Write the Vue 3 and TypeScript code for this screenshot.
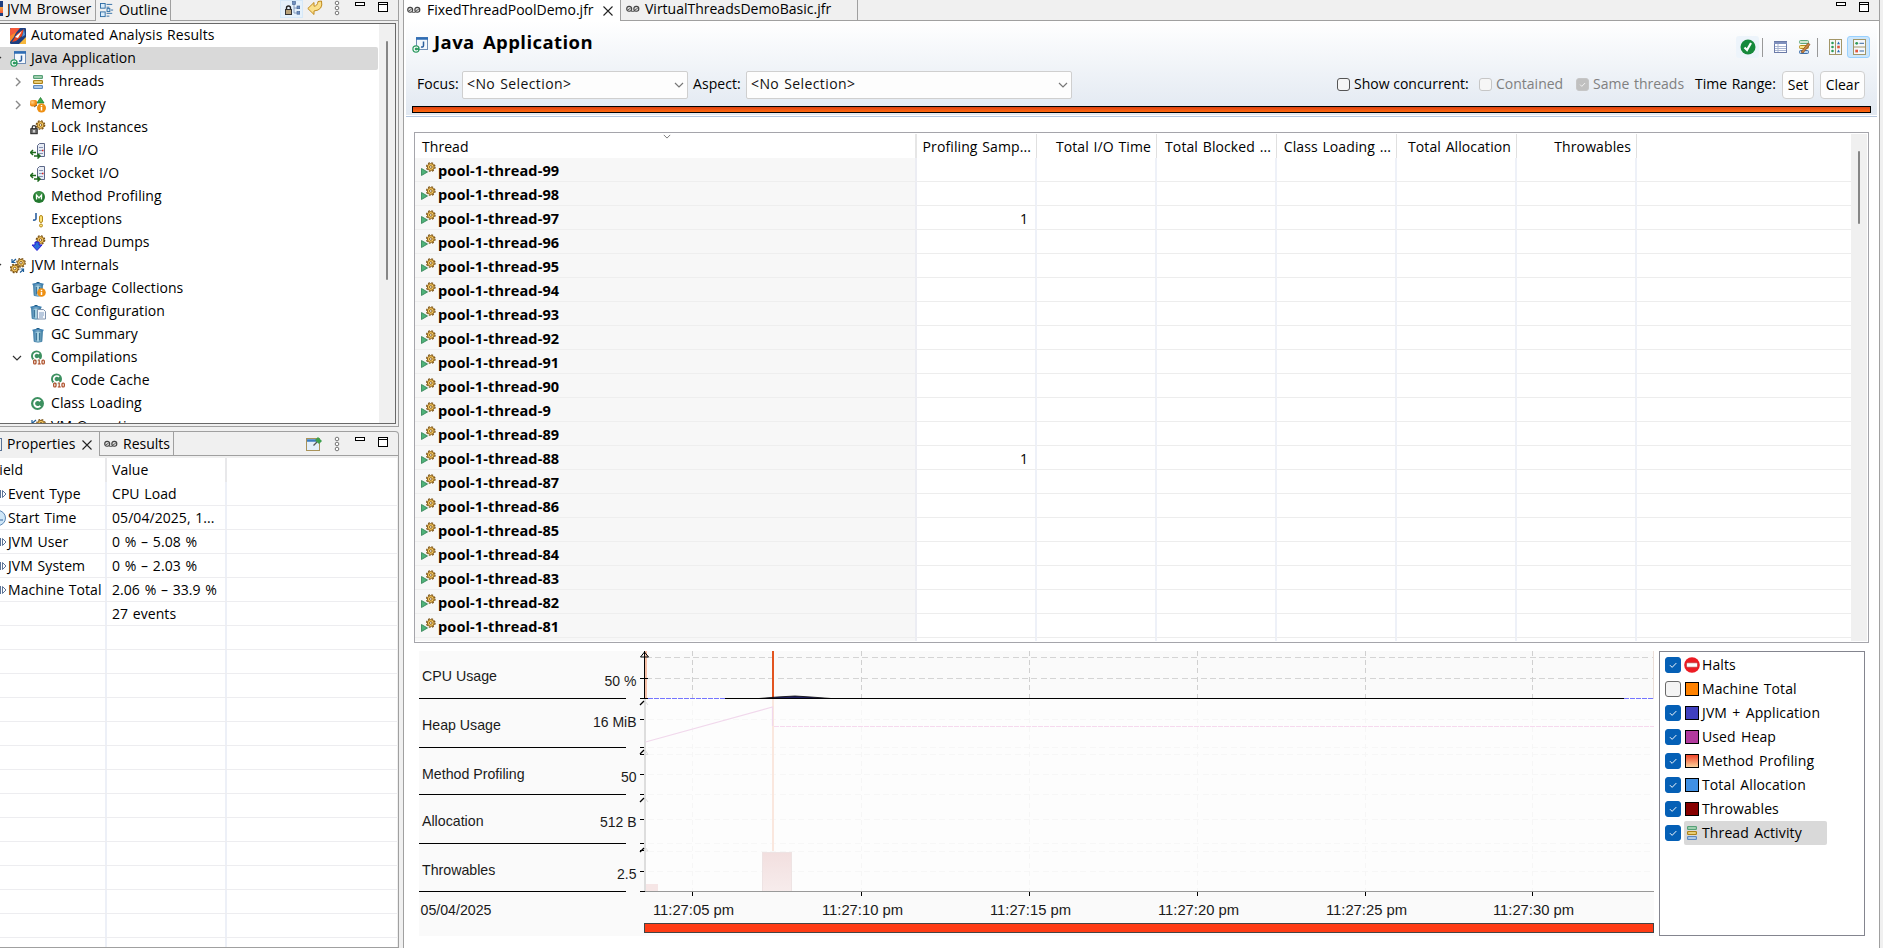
<script setup lang="ts">
interface TreeNode {
  label: string
  icon: string
  depth: number
  arrow?: 'open' | 'closed'
  selected?: boolean
}
interface Property {
  icon: string
  name: string
  value: string
}
interface Series {
  label: string
  checked: boolean
  icon?: string
  swatch?: string
  selected?: boolean
}
interface Lane {
  label: string
  baseline: number
  tick: string
  tickY: number
}

const tree: TreeNode[] = [
  { label: 'Automated Analysis Results', icon: 'rocket', depth: 0 },
  { label: 'Java Application', icon: 'japp', depth: 0, arrow: 'open', selected: true },
  { label: 'Threads', icon: 'threads', depth: 1, arrow: 'closed' },
  { label: 'Memory', icon: 'memory', depth: 1, arrow: 'closed' },
  { label: 'Lock Instances', icon: 'lock', depth: 1 },
  { label: 'File I/O', icon: 'io', depth: 1 },
  { label: 'Socket I/O', icon: 'io', depth: 1 },
  { label: 'Method Profiling', icon: 'method', depth: 1 },
  { label: 'Exceptions', icon: 'exception', depth: 1 },
  { label: 'Thread Dumps', icon: 'dump', depth: 1 },
  { label: 'JVM Internals', icon: 'gears', depth: 0, arrow: 'open' },
  { label: 'Garbage Collections', icon: 'gc', depth: 1 },
  { label: 'GC Configuration', icon: 'gcconf', depth: 1 },
  { label: 'GC Summary', icon: 'bin', depth: 1 },
  { label: 'Compilations', icon: 'compile', depth: 1, arrow: 'open' },
  { label: 'Code Cache', icon: 'compile', depth: 2 },
  { label: 'Class Loading', icon: 'class', depth: 1 },
  { label: 'VM Operations', icon: 'gears', depth: 1 },
]

const properties: Property[] = [
  { icon: 'field', name: 'Event Type', value: 'CPU Load' },
  { icon: 'clock', name: 'Start Time', value: '05/04/2025, 1...' },
  { icon: 'field', name: 'JVM User', value: '0 % – 5.08 %' },
  { icon: 'field', name: 'JVM System', value: '0 % – 2.03 %' },
  { icon: 'field', name: 'Machine Total', value: '2.06 % – 33.9 %' },
  { icon: '', name: '', value: '27 events' },
  ...Array.from({ length: 14 }, () => ({ icon: '', name: '', value: '' })),
]

const columns = ['Profiling Samp...', 'Total I/O Time', 'Total Blocked ...', 'Class Loading ...', 'Total Allocation', 'Throwables']
const threadIds = [99, 98, 97, 96, 95, 94, 93, 92, 91, 90, 9, 89, 88, 87, 86, 85, 84, 83, 82, 81]
const samples: Record<number, string> = { 97: '1', 88: '1' }

const series: Series[] = [
  { label: 'Halts', checked: true, icon: 'halt' },
  { label: 'Machine Total', checked: false, swatch: 'orange' },
  { label: 'JVM + Application', checked: true, swatch: 'blue' },
  { label: 'Used Heap', checked: true, swatch: 'purple' },
  { label: 'Method Profiling', checked: true, swatch: 'warm' },
  { label: 'Total Allocation', checked: true, swatch: 'sky' },
  { label: 'Throwables', checked: true, swatch: 'maroon' },
  { label: 'Thread Activity', checked: true, icon: 'threads', selected: true },
]

const lanes: Lane[] = [
  { label: 'CPU Usage', baseline: 30, tick: '50 %', tickY: 27 },
  { label: 'Heap Usage', baseline: 79, tick: '16 MiB', tickY: 68 },
  { label: 'Method Profiling', baseline: 128, tick: '50', tickY: 123 },
  { label: 'Allocation', baseline: 175, tick: '512 B', tickY: 168 },
  { label: 'Throwables', baseline: 224, tick: '2.5', tickY: 220 },
]
const faintGrid = [68, 96, 103, 123, 143, 168, 192, 200, 220]
const times = [
  { x: 273, label: '11:27:05 pm' },
  { x: 442, label: '11:27:10 pm' },
  { x: 610, label: '11:27:15 pm' },
  { x: 778, label: '11:27:20 pm' },
  { x: 946, label: '11:27:25 pm' },
  { x: 1113, label: '11:27:30 pm' },
]
</script>

<template>
  <div class="workbench">
    <svg class="defs" aria-hidden="true">
      <defs>
        <linearGradient id="gBin" x1="0" x2="1" y1="0" y2="0"><stop offset="0" stop-color="#3f7fae" /><stop offset=".5" stop-color="#b5dbe8" /><stop offset="1" stop-color="#3a7a9d" /></linearGradient>
        <linearGradient id="gBar" x1="0" x2="0" y1="0" y2="1"><stop offset="0" stop-color="#f2dfdf" /><stop offset="1" stop-color="#f7ecec" /></linearGradient>
        <radialGradient id="gOrange" cx=".35" cy=".35"><stop offset="0" stop-color="#ffd08a" /><stop offset="1" stop-color="#f08a10" /></radialGradient>
        <g id="gear"><circle cx="5" cy="5" r="4.200" fill="none" stroke="#7a5316" stroke-width="1.300" stroke-dasharray="1.900 1.400" /><circle cx="5" cy="5" r="3.400" fill="#f7cb62" stroke="#8f6119" stroke-width="1" /><circle cx="5" cy="5" r="1.300" fill="#fff" stroke="#7a5316" stroke-width=".9" /></g>
        <g id="trash"><path d="M3.500 4h9l-.6 10.500q-3.900 1.300-7.800 0z" fill="url(#gBin)" stroke="#3c7ca4" stroke-width=".8" /><path d="M2.500 3.500q5.500-1.800 11 0" fill="none" stroke="#3d7fb0" stroke-width="1.800" /><path d="M6.500 1.500h3" stroke="#1f5c84" /><path d="M6.300 6v7.500M9.700 6v7.500" stroke="#1f5c84" stroke-width=".9" /></g>
      </defs>
      <symbol id="rocket" viewBox="0 0 16 16"><rect width="16" height="16" rx="1" fill="#1d3f80" /><path d="M1 0h9L0 12V1z" fill="#f4593a" /><path d="M9 16h7V9z" fill="#f6b73c" /><path d="M0 8l6-4-2 5-4 5z" fill="#f8892e" /><path d="M2 14L7 6l7-5-2 7-6 5z" fill="#e8451f" /><path d="M5 9l7-6-4 7z" fill="#fff" /><path d="M14 1l1 6-3 2z" fill="#5c9bd8" /></symbol>
      <symbol id="japp" viewBox="0 0 16 16"><rect x="4.500" y=".5" width="11" height="12" fill="#f4f8fd" stroke="#6f8db5" /><path d="M4 1.500h12" stroke="#2e6db5" stroke-width="2.500" /><path d="M11.500 4.500v4q0 2-2.500 1.500" fill="none" stroke="#2c5f9e" stroke-width="1.500" /><circle cx="4" cy="12" r="3.700" fill="#2c9a60" /><path d="M5.700 10.800a2 2 0 1 0 0 2.400" fill="none" stroke="#fff" stroke-width="1.200" /></symbol>
      <symbol id="threads" viewBox="0 0 16 16"><g stroke-width="1.200"><rect x="3.600" y="1.600" width="8.800" height="2.800" rx=".6" fill="#b9dfc0" stroke="#56a077" /><rect x="3.600" y="6.600" width="8.800" height="2.800" rx=".6" fill="#fbe79a" stroke="#ad8218" /><rect x="3.600" y="11.600" width="8.800" height="2.800" rx=".6" fill="#c9dff6" stroke="#5c89c0" /></g></symbol>
      <symbol id="memory" viewBox="0 0 16 16"><path d="M10.500.5L14 6H7z" fill="#3fae4a" stroke="#247a33" stroke-width=".8" /><rect x="0" y="3" width="7" height="6.500" rx="2" fill="url(#gOrange)" /><path d="M4 10l3-2" stroke="#444" stroke-width=".8" /><circle cx="11.500" cy="11" r="4.500" fill="#ee8f12" /><path d="M11.500 8v1.200M11.500 10v3.500" stroke="#fff" stroke-width="1.500" /></symbol>
      <symbol id="lock" viewBox="0 0 16 16"><use href="#gear" x="5.500" y="0" /><path d="M2.200 9V7.500a1.800 1.800 0 0 1 3.600 0V9" fill="none" stroke="#333" stroke-width="1.300" /><rect x=".8" y="8.700" width="6.400" height="5" fill="#777" stroke="#222" /><path d="M4 10v2.500" stroke="#fff" stroke-width="1.300" /></symbol>
      <symbol id="io" viewBox="0 0 16 16"><path d="M7.500 2.500l2-2h5v13h-7z" fill="#e7ecf5" stroke="#5c6788" /><path d="M9 4.500h4M9 7.500h4M9 10.500h4" stroke="#8792b4" /><path d="M12 7.500h1.500" stroke="#d22" stroke-width="1.500" /><path d="M0 9.500h6M3 7L.5 9.500 3 12" fill="none" stroke="#1e6a1e" stroke-width="1.500" /><path d="M4 13h6M7.500 10.500L10 13l-2.500 2.500" fill="none" stroke="#1e6a1e" stroke-width="1.500" /></symbol>
      <symbol id="method" viewBox="0 0 16 16"><circle cx="9" cy="8" r="6" fill="#23792f" /><circle cx="9" cy="6.500" r="4" fill="#4fa457" opacity=".6" /><path d="M6.500 10.500V6L9 8.800 11.500 6v4.500" fill="none" stroke="#fff" stroke-width="1.200" /></symbol>
      <symbol id="exception" viewBox="0 0 16 16"><path d="M6 1v5.500q0 2-3 1.500" fill="none" stroke="#2c5f9e" stroke-width="1.600" /><rect x="9.500" y="3.500" width="3" height="7" rx="1.500" fill="#fbe27a" stroke="#b58a1c" /><circle cx="11" cy="13.500" r="1.500" fill="#fbe27a" stroke="#b58a1c" /></symbol>
      <symbol id="dump" viewBox="0 0 16 16"><use href="#gear" x="5.500" y="0" /><path d="M5 7h4v3h3l-5 5.500L2 10h3z" fill="#2b6ed8" stroke="#2a18d8" /></symbol>
      <symbol id="gears" viewBox="0 0 16 16"><use href="#gear" x="6" y="-.2" /><use href="#gear" x="-.3" y="5.500" /><path d="M6 1L2.500 4M2 1v3.500h3.500M10 14.500l3.500-3M10.500 11h3v3" fill="none" stroke="#1d5d98" stroke-width="1.200" /></symbol>
      <symbol id="bin" viewBox="0 0 16 16"><use href="#trash" /></symbol>
      <symbol id="gc" viewBox="0 0 16 16"><use href="#trash" /><circle cx="11.500" cy="11.500" r="4.300" fill="#ee8f12" /><path d="M11.500 8.700v1.200M11.500 10.700v3.300" stroke="#fff" stroke-width="1.500" /></symbol>
      <symbol id="gcconf" viewBox="0 0 16 16"><use href="#trash" x="-2" /><path d="M7.500 5.500h6l2 2v7.500h-8z" fill="#f5f8fc" stroke="#7f93ae" /><path d="M9 9h5M9 11h5M9 13h4" stroke="#7d9ac0" /></symbol>
      <symbol id="class" viewBox="0 0 16 16"><circle cx="7.500" cy="7.500" r="6.500" fill="#3d9060" /><path d="M10.300 5.200a3.500 3.500 0 1 0 0 4.600" fill="none" stroke="#fff" stroke-width="1.900" /></symbol>
      <symbol id="compile" viewBox="0 0 16 16"><circle cx="6.500" cy="6" r="5.500" fill="#3d9060" /><path d="M9 4a3 3 0 1 0 0 4" fill="none" stroke="#fff" stroke-width="1.700" /><path d="M3 9h13V16H3z" fill="#fff" opacity=".8" /><rect x="3.700" y="10" width="2.300" height="4" rx="1" fill="none" stroke="#a8441c" stroke-width="1.200" /><path d="M8.200 10h1v4M7.800 14h3" fill="none" stroke="#a8441c" stroke-width="1.100" /><rect x="12" y="10" width="2.300" height="4" rx="1" fill="none" stroke="#a8441c" stroke-width="1.200" /></symbol>
      <symbol id="outline" viewBox="0 0 16 16"><g fill="#d9ecfb" stroke="#2e6da4"><rect x=".5" y=".5" width="5" height="5" /><rect x=".5" y="9.500" width="5" height="5" /><rect x="7.500" y="6" width="3" height="3" /></g><path d="M7 1.500h6M7 4.500h3M11.500 7.500H14M7 11h6M7 14h3" stroke="#2e6da4" /></symbol>
      <symbol id="reel" viewBox="0 0 16 8"><rect x=".8" y="1.200" width="5.200" height="5.200" rx="2.300" fill="#ddd" stroke="#444" stroke-width="1.300" /><rect x="8.400" y="1.200" width="5.200" height="5.200" rx="2.300" fill="#ddd" stroke="#444" stroke-width="1.300" /><path d="M2 5l3-2M9.600 5l3-2M5.500 6.500h3.500" stroke="#555" /></symbol>
      <symbol id="close" viewBox="0 0 10 10"><path d="M.5.5l9 9M9.500.5l-9 9" stroke="#222" stroke-width="1.100" /></symbol>
      <symbol id="dots" viewBox="0 0 6 16"><g fill="#fff" stroke="#777"><circle cx="3" cy="3" r="1.800" /><circle cx="3" cy="8" r="1.800" /><circle cx="3" cy="13" r="1.800" /></g></symbol>
      <symbol id="min" viewBox="0 0 10 10"><rect x=".5" y=".5" width="9" height="3" fill="#fff" stroke="#000" /></symbol>
      <symbol id="max" viewBox="0 0 10 10"><rect x=".5" y=".5" width="9" height="9" fill="#fff" stroke="#000" /><path d="M0 2.500h10" stroke="#000" /></symbol>
      <symbol id="hier" viewBox="0 0 16 16"><path d="M2.500 8.500V7a2 2 0 0 1 4 0v1.500" fill="none" stroke="#222" stroke-width="1.400" /><rect x="1.500" y="8.500" width="6" height="5" fill="#b8a27a" stroke="#333" /><path d="M10 2v10M10 7h4M10 12h4" fill="none" stroke="#8aa0c0" /><g fill="#6f8fc0" stroke="#41618f" stroke-width=".6"><rect x="8.500" y=".5" width="3" height="3" /><rect x="13" y="5" width="2.700" height="2.700" /><rect x="13" y="10.500" width="2.700" height="2.700" /></g></symbol>
      <symbol id="back" viewBox="0 0 16 16"><path d="M.8 8.500L7 2.500v3.700Q10.500 6 11 1.500L14.500 1q2 9-7.500 10v3.500z" fill="#fbe08a" stroke="#c08a1e" /></symbol>
      <symbol id="pin" viewBox="0 0 16 16"><rect x=".5" y="2.500" width="13" height="12" fill="#e3effa" stroke="#a9935a" /><path d="M1 4.500h12" stroke="#3b7dbf" stroke-width="2.500" /><path d="M7.500 9.500l4-4" stroke="#555" stroke-width="1.300" /><path d="M9 4l3-3 4 4-3 3z" fill="#3da04d" /></symbol>
      <symbol id="run" viewBox="0 0 15 15"><use href="#gear" x="4.800" y="0" /><path d="M.5 6.500v7l6-3.500z" fill="#4fb37a" stroke="#2d7f50" stroke-width=".8" /></symbol>
      <symbol id="ok" viewBox="0 0 16 16"><circle cx="8" cy="8" r="7.500" fill="#178a3c" /><path d="M4.500 8.500L7 11l4-7" fill="none" stroke="#fff" stroke-width="2.200" /></symbol>
      <symbol id="list" viewBox="0 0 16 16"><rect x="2.500" y="2.500" width="12" height="11" fill="#fff" stroke="#6b7ba8" /><path d="M2 4h13" stroke="#7f90bd" stroke-width="2" /><path d="M3 7.500h11M3 9.500h11M3 11.500h11M6 5v8" stroke="#a9b5d2" /></symbol>
      <symbol id="edit" viewBox="0 0 16 16"><rect x="3.500" y="1.500" width="9" height="3" rx="1" fill="#cfe8cf" stroke="#5fa97d" /><rect x="3.500" y="6.500" width="9" height="3" rx="1" fill="#fbe488" stroke="#b58a1c" /><rect x="3.500" y="11.500" width="9" height="3" rx="1" fill="#bcd8f6" stroke="#3e6fa8" /><path d="M5 13l7-9 2 1.500-7 8.500z" fill="#c98545" stroke="#8a5526" stroke-width=".8" /></symbol>
      <symbol id="grid2" viewBox="0 0 16 16"><rect x="2.500" y=".5" width="12" height="15" fill="#f5f8fc" stroke="#a39668" /><path d="M8.500 1v14" stroke="#a39668" /><g fill="#2f9a58"><circle cx="5.500" cy="4" r="1.300" /><circle cx="5.500" cy="8" r="1.300" /><circle cx="5.500" cy="12" r="1.300" /></g><path d="M10 5.200l1.500-2.700L13 5.200zM10 13.200l1.500-2.700 1.500 2.700z" fill="#2e6db5" /><rect x="10.200" y="6.700" width="2.600" height="2.600" fill="#e2553c" /></symbol>
      <symbol id="grid1" viewBox="0 0 16 16"><rect x="2.500" y=".5" width="12" height="15" fill="#f5f8fc" stroke="#a39668" /><path d="M2.500 8h12" stroke="#a39668" /><circle cx="5.700" cy="4.300" r="1.400" fill="#2f9a58" /><rect x="4.300" y="10.700" width="2.700" height="2.700" fill="#e2553c" /><path d="M8.500 4.300H13M8.500 12H13" stroke="#35669f" /></symbol>
      <symbol id="field" viewBox="0 0 7 12"><path d="M.5 2v8" stroke="#5b7396" /><path d="M2.500 2.500L6 6 2.500 9.500z" fill="#fff" stroke="#5b7396" /></symbol>
      <symbol id="clock" viewBox="0 0 7 16"><circle cx="-2" cy="8" r="7.500" fill="#cfe6f7" stroke="#5b87b4" /><path d="M0 10h3" stroke="#35669f" /></symbol>
      <symbol id="halt" viewBox="0 0 16 16"><circle cx="8" cy="8" r="7.800" fill="#ec1c24" /><rect x="2.500" y="5.800" width="11" height="4.400" rx="1" fill="#fff" stroke="#a33" stroke-width=".6" /></symbol>
      <symbol id="tick" viewBox="0 0 16 16"><path d="M4.500 8.200L7 10.700l4.800-4.900" fill="none" stroke="#fff" stroke-width="1.100" /></symbol>
      <symbol id="down" viewBox="0 0 10 6"><path d="M1 1l4 4 4-4" fill="none" stroke="currentColor" stroke-width="1.200" /></symbol>
      <symbol id="right" viewBox="0 0 6 10"><path d="M1 1l4 4-4 4" fill="none" stroke="currentColor" stroke-width="1.400" /></symbol>
    </svg>

    <aside class="side">
      <section class="view outline-view">
        <header class="tabs top-tabs">
          <div class="tab idle browser-tab"><i class="rocket-edge"></i><span>JVM Browser</span></div>
          <div class="tab outline-tab"><svg class="ico14"><use href="#outline" /></svg><span>Outline</span></div>
          <div class="tools">
            <span class="hot"><svg class="ico16"><use href="#hier" /></svg></span>
            <svg class="ico16 back"><use href="#back" /></svg>
            <svg class="dots"><use href="#dots" /></svg>
            <svg class="ico10 min"><use href="#min" /></svg>
            <svg class="ico10"><use href="#max" /></svg>
          </div>
        </header>
        <div class="tree-frame">
          <ul class="tree">
            <li v-for="node in tree" :key="node.label" :class="['d' + node.depth, { selected: node.selected }]">
              <span class="arrow" :class="node.arrow"><svg v-if="node.arrow === 'open'" class="down"><use href="#down" /></svg><svg v-else-if="node.arrow" class="right"><use href="#right" /></svg></span>
              <svg class="ico16"><use :href="'#' + node.icon" /></svg>
              <span class="label">{{ node.label }}</span>
            </li>
          </ul>
          <div class="scroll"><i></i></div>
        </div>
      </section>

      <section class="view props-view">
        <header class="tabs low-tabs">
          <div class="tab props-tab"><i class="doc-edge"></i><span>Properties</span><svg class="ico10"><use href="#close" /></svg></div>
          <div class="tab idle results-tab"><svg class="reel"><use href="#reel" /></svg><span>Results</span></div>
          <div class="tools">
            <svg class="ico16 pin"><use href="#pin" /></svg>
            <svg class="dots"><use href="#dots" /></svg>
            <svg class="ico10 min"><use href="#min" /></svg>
            <svg class="ico10"><use href="#max" /></svg>
          </div>
        </header>
        <div class="props">
          <div class="prow head"><span class="c1"><span class="cut">Field</span></span><span class="c2">Value</span></div>
          <div v-for="(p, i) in properties" :key="i" class="prow">
            <span class="c1"><svg v-if="p.icon" class="pico"><use :href="'#' + p.icon" /></svg>{{ p.name }}</span>
            <span class="c2">{{ p.value }}</span>
          </div>
        </div>
      </section>
    </aside>

    <main class="editor">
      <header class="tabs etabs">
        <div class="tab active"><svg class="reel"><use href="#reel" /></svg><span>FixedThreadPoolDemo.jfr</span><svg class="ico10"><use href="#close" /></svg></div>
        <div class="tab idle second"><svg class="reel"><use href="#reel" /></svg><span>VirtualThreadsDemoBasic.jfr</span></div>
        <div class="tools">
          <svg class="ico10 min"><use href="#min" /></svg>
          <svg class="ico10"><use href="#max" /></svg>
        </div>
      </header>

      <section class="banner">
        <div class="title-row">
          <svg class="ico16"><use href="#japp" /></svg>
          <h1>Java Application</h1>
          <div class="page-tools">
            <span class="btn ok"><svg class="ico16"><use href="#ok" /></svg></span>
            <i class="sep"></i>
            <span class="btn"><svg class="ico16"><use href="#list" /></svg></span>
            <span class="btn"><svg class="ico16"><use href="#edit" /></svg></span>
            <i class="sep"></i>
            <span class="btn"><svg class="ico16"><use href="#grid2" /></svg></span>
            <span class="btn on"><svg class="ico16"><use href="#grid1" /></svg></span>
          </div>
        </div>
        <div class="filter-row">
          <label class="focus">Focus:</label>
          <div class="combo narrow"><span>&lt;No Selection&gt;</span><svg class="down"><use href="#down" /></svg></div>
          <label class="aspect">Aspect:</label>
          <div class="combo wide"><span>&lt;No Selection&gt;</span><svg class="down"><use href="#down" /></svg></div>
          <div class="range">
            <i class="box"></i><span class="w-show">Show concurrent:</span>
            <i class="box off"></i><span class="dim w-cont">Contained</span>
            <i class="box off full"><svg><use href="#tick" /></svg></i><span class="dim w-same">Same threads</span>
            <span class="w-time">Time Range:</span>
            <button class="set">Set</button>
            <button class="clear">Clear</button>
          </div>
        </div>
        <div class="range-bar"></div>
      </section>

      <section class="threads">
        <div class="grid-body">
          <div class="trow thead">
            <span class="name">Thread<svg class="sort"><use href="#down" /></svg></span>
            <span v-for="c in columns" :key="c" class="num">{{ c }}</span>
            <span class="rest"></span>
          </div>
          <div v-for="id in threadIds" :key="id" class="trow">
            <span class="name"><svg class="run"><use href="#run" /></svg><b>pool-1-thread-{{ id }}</b></span>
            <span v-for="(c, i) in columns" :key="c" class="num">{{ i === 0 ? samples[id] : '' }}</span>
            <span class="rest"></span>
          </div>
          <div class="trow tail"><span class="name"></span><span v-for="c in columns" :key="c" class="num"></span></div>
        </div>
        <div class="scroll"><i></i></div>
      </section>

      <section class="lower">
        <svg class="chart" width="1235" height="285" viewBox="0 0 1235 285">
          <rect width="1235" height="285" fill="#fafafa" />
          <rect x="225" y="48" width="1010" height="192" fill="#fdfdfd" />
          <g shape-rendering="crispEdges">
            <path d="M227 6.500H1235M227 27.500H1235" stroke="#d4d4d4" stroke-dasharray="6 3.400" />
            <path v-for="t in times" :key="t.x" :d="`M${t.x + 0.5} 0V47`" stroke="#d0d0d0" stroke-dasharray="5 3.500" />
            <path v-for="y in faintGrid" :key="y" :d="`M229 ${y + 0.5}H1235`" stroke="#f7f7f7" stroke-dasharray="6 3.400" />
            <path v-for="t in times" :key="t.label" :d="`M${t.x + 0.5} 50V240`" stroke="#f6f6f6" stroke-dasharray="5 3.500" />
            <rect x="353" y="0" width="2" height="47" fill="#e2541f" />
            <rect x="353" y="48" width="2" height="152" fill="#fae7de" />
            <rect x="226" y="0" width="2" height="47" fill="#f6c0a8" />
            <rect x="226" y="48" width="1" height="192" fill="#faece6" />
            <path d="M1234.500 0V48" stroke="#eaded8" />
            <rect x="343.500" y="201.500" width="29" height="39" fill="url(#gBar)" stroke="#eee3e3" />
            <rect x="226" y="233" width="13" height="7" fill="#f6e6e6" />
            <path d="M355 75.500H1235" stroke="#f6d9ee" stroke-dasharray="5 1" />
            <path d="M0 47.500H207M0 96.500H207M0 143.500H207M0 192.500H207M0 240.500H207" stroke="#000" />
            <path d="M225 240.500H1235" stroke="#999" />
            <rect x="225" y="48" width="2" height="192" fill="#ddd" />
            <path d="M225.500 0V48" stroke="#000" stroke-width="1.500" />
            <path d="M221 27.500h8M221 47.500h8M221 68.500h4M221 96.500h4M221 123.500h4M221 143.500h4M221 168.500h4M221 192.500h4M221 199.500h4M221 220.500h4M221 240.500h5" stroke="#000" />
            <path v-for="t in times" :key="'t' + t.x" :d="`M${t.x + 0.5} 241v4`" stroke="#000" />
            <path d="M229 47.500H306M1205 47.500H1235" stroke="#7474ff" stroke-dasharray="5 1" />
            <path d="M306 47.500H1205" stroke="#000" />
          </g>
          <path d="M226.500 91L353.500 56V75" fill="none" stroke="#f1d8ec" stroke-width="1.200" />
          <path d="M340 47.500L358 46 376 45 392 46 412 47.500z" fill="#202060" stroke="#000" stroke-width=".8" />
          <g fill="none" stroke="#000">
            <path d="M221.500 6L225.500 1 229.500 6z" />
            <path d="M221 54L225 50M221 151L225 147M221 201L225 197M221 103l4-4" stroke-width="1.300" />
            <path d="M221 103.500h4" />
            <path d="M226 50l3 4M226 99l3 4.500h-3M226 147l3 4M226 196l3 4h-3" stroke="#ddd" />
          </g>
          <g class="chart-text">
            <g v-for="l in lanes" :key="l.label">
              <text class="lane-name" x="3" :y="l.baseline">{{ l.label }}</text>
              <text class="lane-tick" x="217.500" :y="l.tickY + 7.5" text-anchor="end">{{ l.tick }}</text>
            </g>
            <text class="lane-name" x="1.500" y="264">05/04/2025</text>
            <text v-for="t in times" :key="t.label" :x="t.x + 1.5" y="264" text-anchor="middle">{{ t.label }}</text>
          </g>
          <rect x="225.500" y="272.500" width="1009" height="9" fill="#ff3b14" stroke="#444" />
        </svg>
        <ul class="legend">
          <li v-for="s in series" :key="s.label">
            <i class="check" :class="{ checked: s.checked }"><svg v-if="s.checked"><use href="#tick" /></svg></i>
            <span class="entry" :class="{ selected: s.selected }">
              <i v-if="s.swatch" class="swatch" :class="s.swatch"></i>
              <svg v-else class="ico16"><use :href="'#' + s.icon" /></svg>
              <span>{{ s.label }}</span>
            </span>
          </li>
        </ul>
      </section>
    </main>
  </div>
</template>

<style>
html,
body {
  margin: 0;
  overflow: hidden;
  background: #f0f0f0;
}
</style>

<style scoped>
* {
  box-sizing: border-box;
}
.workbench {
  display: flex;
  width: 1883px;
  height: 948px;
  overflow: hidden;
  background: #f0f0f0;
  color: #000;
  font: 14px/20px 'Open Sans', 'Noto Sans', sans-serif;
  word-spacing: 1px;
  letter-spacing: 0.06px;
  white-space: nowrap;
}
.defs {
  position: absolute;
  width: 0;
  height: 0;
}
svg {
  flex: none;
  display: block;
}
ul {
  margin: 0;
  padding: 0;
  list-style: none;
}
.ico16 { width: 16px; height: 16px; }
.ico14 { width: 15px; height: 15px; }
.ico10 { width: 10px; height: 10px; }
.dots { width: 6px; height: 16px; }
.reel { width: 15px; height: 8px; }

.side {
  width: 399px;
  flex: none;
  display: flex;
  flex-direction: column;
  gap: 4px;
}
.view {
  border: solid #a0a0a0;
  border-width: 0 1px 1px 0;
  display: flex;
  flex-direction: column;
}
.outline-view { height: 427px; }
.props-view { height: 517px; border-top-width: 1px; border-top-right-radius: 4px; }
.tabs { display: flex; flex: none; }
.tab {
  display: flex;
  align-items: center;
  flex: none;
}
.tools {
  flex: 1;
  display: flex;
  justify-content: flex-end;
  align-items: flex-start;
  border-bottom: 1px solid #a0a0a0;
}
.idle { border: solid #a0a0a0; border-width: 0 1px 1px 0; }
.top-tabs { height: 21px; }
.browser-tab { width: 96px; gap: 4px; }
.rocket-edge { width: 3px; height: 15px; margin-top: -4px; background: linear-gradient(#1d3f80 40%, #f6a33c 40%, #f4593a 80%, #1d3f80 80%); }
.outline-tab { width: 75px; padding-left: 4px; gap: 4px; border-right: 1px solid #a0a0a0; }
.top-tabs .tab span, .etabs .tab span { margin-top: -2px; }
.top-tabs .tools { padding-right: 10px; }
.hot { width: 23px; height: 18px; background: #e5f1fb; border: 1px solid #d5e8f8; padding-left: 3px; margin-right: 4px; }
.back { margin-right: 11px; }
.top-tabs .dots { margin-right: 15px; }
.top-tabs .ico10 { margin-top: 2px; }
.min { margin-right: 13px; }

.tree-frame {
  margin: 2px 2px 2px 0;
  height: 401px;
  display: flex;
  background: #fff;
  border: solid #696969;
  border-width: 1px 1px 1px 0;
}
.tree { flex: 1; overflow: hidden; }
.tree li {
  display: flex;
  align-items: center;
  height: 23px;
  width: 378px;
  border-radius: 0 2px 2px 0;
}
.tree li.selected { background: #d9d9d9; }
.tree .label { margin: -1px 0 0 5px; }
.arrow { flex: none; width: 10px; display: flex; justify-content: flex-end; color: #333; }
.d0 .arrow .down { margin-right: 8px; }
.d1 .arrow { width: 30px; padding-right: 8px; }
.d1 .arrow.closed { padding-right: 9px; color: #888; }
.d2 .arrow { width: 50px; }
.down { width: 10px; height: 6px; }
.right { width: 6px; height: 10px; }
.scroll { flex: none; width: 16px; background: #f0f0f0; }
.scroll i { display: block; width: 2px; background: #868686; border-radius: 1px; }
.tree-frame .scroll i { height: 239px; margin: 17px 0 0 7px; }

.low-tabs { height: 24px; }
.props-tab { width: 99px; }
.doc-edge { width: 2px; height: 13px; border: solid #5a7396; border-width: 1px 1px 1px 0; margin-right: 5px; }
.props-tab .ico10 { margin-left: auto; margin-right: 7px; }
.results-tab { width: 75px; padding-left: 4px; gap: 4px; border-left: 1px solid #a0a0a0; letter-spacing: 0; }
.low-tabs .tools { padding: 4px 10px 0 0; }
.pin { margin-right: 12px; }
.low-tabs .dots { margin-right: 15px; }
.low-tabs .ico10 { margin-top: 1px; }
.props { flex: 1; background: #fff; margin: 2px 1px 0 0; overflow: hidden; }
.prow { display: flex; height: 24px; border-bottom: 1px solid #ededf0; line-height: 23px; }
.prow.head { border: 0; line-height: 24px; height: 24px; }
.c1 { width: 107px; border-right: 2px solid #edf0f7; display: flex; align-items: center; overflow: hidden; }
.c2 { width: 120px; padding-left: 5px; border-right: 2px solid #edf0f7; }
.head .c1, .head .c2 { border-right-color: #e8e8ea; }
.cut { margin-left: -8px; }
.pico { width: 7px; height: 16px; margin-right: 1px; }

.editor {
  width: 1477px;
  margin-left: 4px;
  background: #fff;
  border: solid #a0a0a0;
  border-width: 0 1px;
  flex: none;
  display: flex;
  flex-direction: column;
}
.etabs { height: 21px; letter-spacing: 0; }
.etabs .active { width: 216px; padding-left: 3px; }
.etabs .active span { margin-left: 5px; }
.etabs .active .ico10 { margin-left: auto; margin-right: 7px; }
.second { width: 238px; background: #f0f0f0; border-left: 1px solid #a0a0a0; padding-left: 5px; gap: 4px; }
.etabs .tools { background: #f0f0f0; padding: 2px 10px 0 0; }
.etabs .reel { margin-top: -2px; }

.banner {
  margin: 0 2px;
  height: 96px;
  background: linear-gradient(#fff, #e1e8f1);
  border-bottom: 1px solid #b4c6de;
  box-shadow: inset 0 -1px #fff;
}
.title-row { display: flex; align-items: center; height: 44px; padding-left: 6px; }
.title-row .ico16 { margin-top: 4px; }
h1 { margin: -2px 0 0 6px; font-size: 18.500px; line-height: 26px; font-weight: 700; letter-spacing: 0.42px; word-spacing: 3px; }
.page-tools { margin-left: auto; display: flex; align-items: center; padding: 8px 7px 0 0; }
.page-tools .ico16 { margin: 0; }
.btn { width: 23px; height: 22px; display: flex; align-items: center; justify-content: center; border-radius: 3px; margin-right: 1px; border: 1px solid transparent; }
.ok { background: #edf4fb; margin-right: 2px; }
.on { background: #cce6fb; border-color: #99d1ff; margin-right: 0; }
.sep { width: 1px; height: 19px; background: #999; margin: 0 5px 0 1px; }

.filter-row { display: flex; align-items: center; height: 38px; padding: 0 12px 0 11px; margin-top: 1px; }
.filter-row label, .filter-row span { position: relative; top: -1px; }
.focus { width: 45px; }
.aspect { width: 53px; margin-left: 5px; }
.combo {
  height: 28px;
  background: #fdfdfd;
  border: 1px solid #cfcfcf;
  border-radius: 2px;
  display: flex;
  align-items: center;
  justify-content: space-between;
  padding: 0 3px 0 4px;
  color: #111;
  letter-spacing: 0.4px;
}
.combo .down { color: #777; }
.narrow { width: 226px; }
.wide { width: 326px; }
.range { display: flex; align-items: center; margin-left: auto; letter-spacing: 0; }
.box { width: 13px; height: 13px; border: 1px solid #555; border-radius: 3px; background: #f6f6f6; margin: -2px 4px 0 0; flex: none; }
.off { border-color: #c6c6c6; }
.full { background: #c0c0c0; }
.full svg { width: 11px; height: 11px; }
.dim { color: #808080; }
.w-show { width: 125px; word-spacing: 0; }
.w-cont { width: 80px; }
.w-same { width: 102px; }
.w-time { width: 87px; }
button {
  height: 28px;
  padding: 0 0 1px;
  font: inherit;
  color: #000;
  background: #fdfdfd;
  border: 1px solid #d0d0d0;
  border-radius: 4px;
}
.set { width: 32px; }
.clear { width: 45px; margin-left: 6px; }
.range-bar { height: 7px; margin: 2px 6px 0; border: 1px solid #000; background: linear-gradient(#de4010, #ff6a10); }

.threads {
  margin: 15px 10px 0;
  height: 511px;
  flex: none;
  border: 1px solid #a5a5ab;
  display: flex;
  padding: 1px 1px 1px 0;
}
.grid-body { flex: 1; overflow: hidden; }
.trow { display: flex; height: 24px; line-height: 24px; }
.name { width: 502px; border-right: 2px solid #ecedf3; background: #f7f7f7; display: flex; align-items: center; border-bottom: 1px solid #eee; padding-left: 6px; }
.name b { margin: 2px 0 0 2px; font-size: 14.500px; letter-spacing: 0.12px; }
.run { width: 15px; height: 15px; }
.num { width: 120px; border-right: 2px solid #eef1f8; border-bottom: 1px solid #ededed; text-align: right; padding: 1px 7px 0 0; }
.rest { flex: 1; border-bottom: 1px solid #ededed; }
.thead span { background: #fff; border-bottom: 0; }
.thead .name { position: relative; padding: 1px 0 0 7px; border-right-color: #e6e6e6; }
.thead .num { padding-right: 5px; border-right: 1px solid #e0e0e0; letter-spacing: 0.1px; }
.sort { position: absolute; left: 248px; top: 0; width: 8px; height: 5px; color: #777; }
.tail { height: 5px; }
.tail span { border-bottom: 0; }
.threads .scroll i { height: 73px; margin: 17px 0 0 7px; }

.lower { display: flex; margin: 8px 16px 0 15px; }
.chart-text { font: 14.800px 'Liberation Sans', Arial, sans-serif; fill: #1a1a1a; letter-spacing: 0; word-spacing: 0; }
.lane-name { font-size: 14.200px; }
.lane-tick { font-size: 14px; }
.legend { margin-left: 5px; width: 206px; flex: none; height: 285px; border: 1px solid #84858f; padding-top: 1px; letter-spacing: 0.12px; word-spacing: 1.500px; }
.legend li { display: flex; align-items: center; height: 24px; padding-left: 5px; }
.check { width: 16px; height: 16px; flex: none; border: 1px solid #6a6a6a; border-radius: 3px; background: #f4f4f4; }
.checked { background: #0560b6; border-color: #0560b6; }
.check svg { width: 14px; height: 14px; }
.entry { margin-left: 3px; height: 24px; display: flex; align-items: center; border-radius: 2px; }
.entry .ico16 { margin-right: 2px; }
.entry.selected { background: #d9d9d9; width: 143px; }
.swatch { width: 14px; height: 14px; border: 1px solid #000; margin: 0 3px 0 1px; }
.orange { background: #ff8200; }
.blue { background: #4040bf; }
.purple { background: #b23a9e; }
.warm { background: linear-gradient(#f0452a, #fbd09a); }
.sky { background: #4090e4; }
.maroon { background: #870000; }
</style>
